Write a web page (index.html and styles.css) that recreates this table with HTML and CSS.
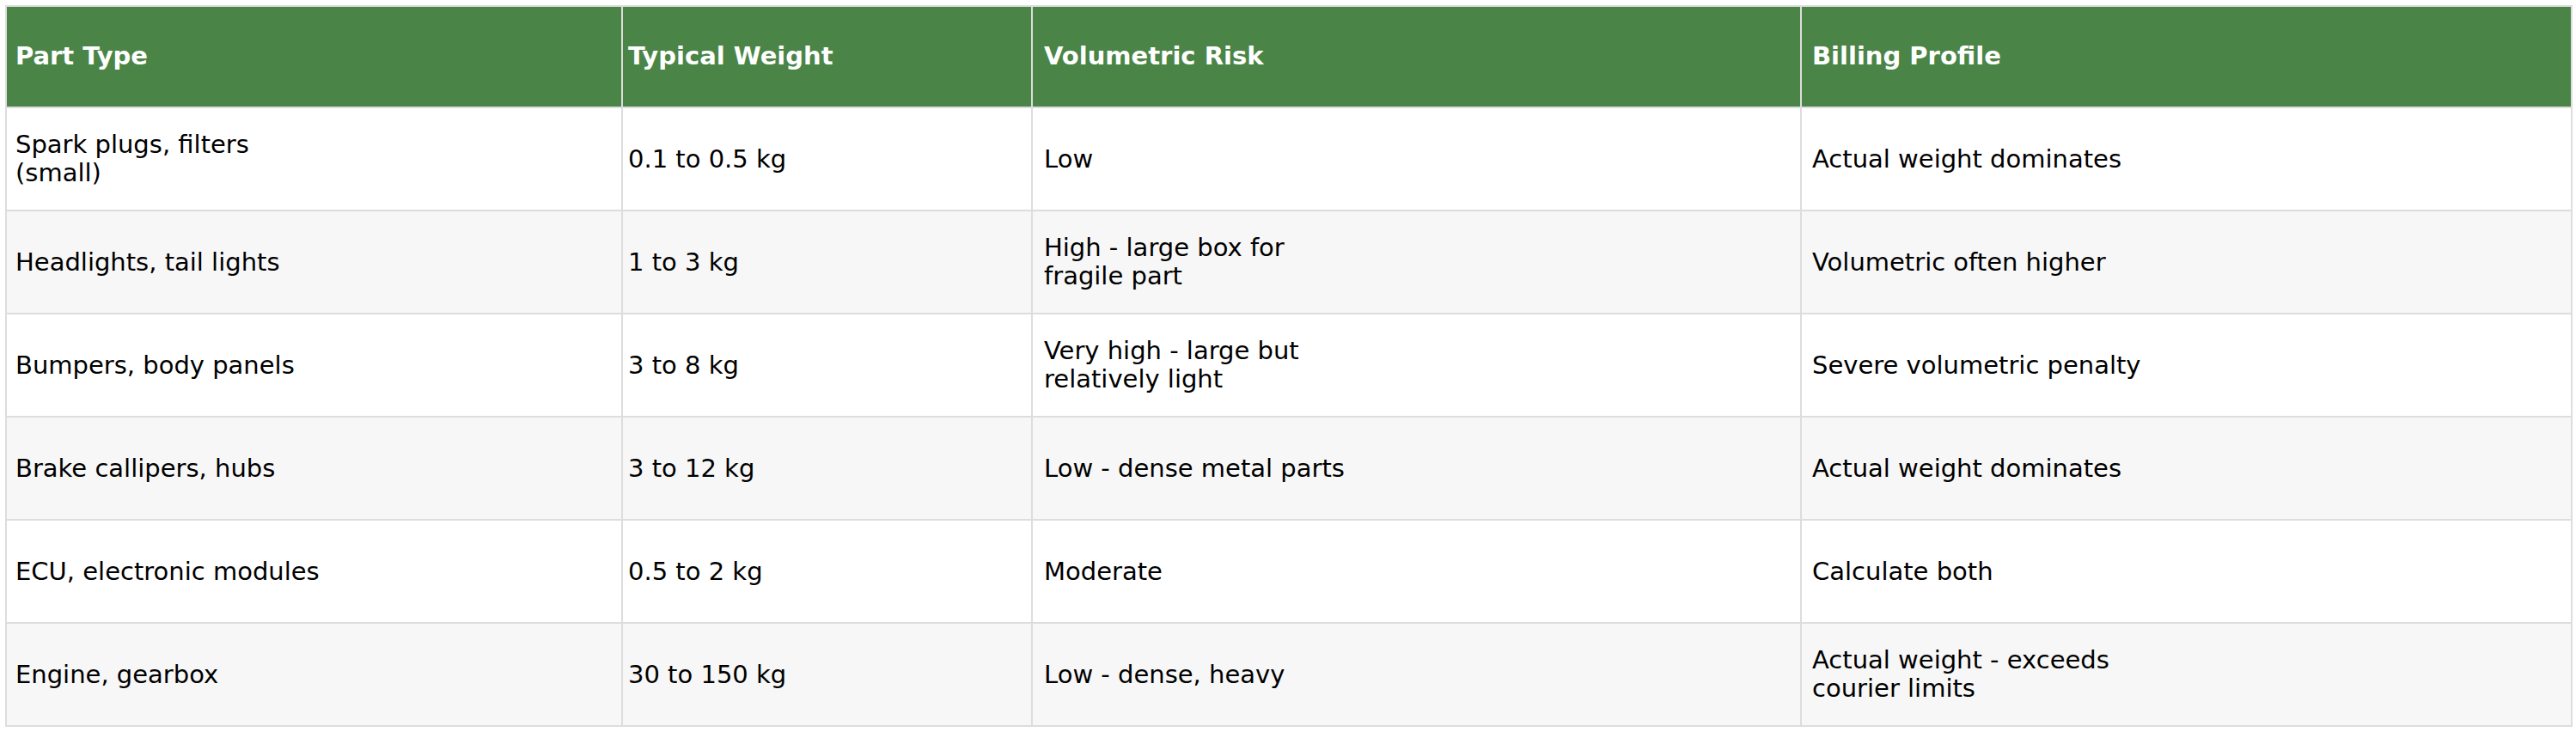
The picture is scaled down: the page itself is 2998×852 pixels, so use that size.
FILE: index.html
```html
<!DOCTYPE html>
<html>
<head>
<meta charset="utf-8">
<link rel="stylesheet" href="styles.css">
</head>
<body>
<table class="parts">
  <colgroup>
    <col class="c1">
    <col class="c2">
    <col class="c3">
    <col class="c4">
  </colgroup>
  <thead>
    <tr>
      <th class="p1">Part Type</th>
      <th class="p2">Typical Weight</th>
      <th class="p3">Volumetric Risk</th>
      <th class="p4">Billing Profile</th>
    </tr>
  </thead>
  <tbody>
    <tr>
      <td class="p1">Spark plugs, filters<br>(small)</td>
      <td class="p2">0.1 to 0.5 kg</td>
      <td class="p3">Low</td>
      <td class="p4">Actual weight dominates</td>
    </tr>
    <tr>
      <td class="p1">Headlights, tail lights</td>
      <td class="p2">1 to 3 kg</td>
      <td class="p3">High - large box for<br>fragile part</td>
      <td class="p4">Volumetric often higher</td>
    </tr>
    <tr>
      <td class="p1">Bumpers, body panels</td>
      <td class="p2">3 to 8 kg</td>
      <td class="p3">Very high - large but<br>relatively light</td>
      <td class="p4">Severe volumetric penalty</td>
    </tr>
    <tr>
      <td class="p1">Brake callipers, hubs</td>
      <td class="p2">3 to 12 kg</td>
      <td class="p3">Low - dense metal parts</td>
      <td class="p4">Actual weight dominates</td>
    </tr>
    <tr>
      <td class="p1">ECU, electronic modules</td>
      <td class="p2">0.5 to 2 kg</td>
      <td class="p3">Moderate</td>
      <td class="p4">Calculate both</td>
    </tr>
    <tr>
      <td class="p1">Engine, gearbox</td>
      <td class="p2">30 to 150 kg</td>
      <td class="p3">Low - dense, heavy</td>
      <td class="p4">Actual weight - exceeds<br>courier limits</td>
    </tr>
  </tbody>
</table>
</body>
</html>
```
FILE: styles.css
```css
html, body {
  margin: 0;
  padding: 0;
  background: #ffffff;
}

body {
  padding: 6px;
  font-family: "DejaVu Sans", "Liberation Sans", sans-serif;
  font-size: 29px;
  color: #000000;
}

.parts {
  border-collapse: collapse;
  table-layout: fixed;
  width: 2986px;
  border: 2px solid #dddddd;
}

.c1 { width: 717px; }
.c2 { width: 477px; }
.c3 { width: 895px; }
.c4 { width: 897px; }

.parts th,
.parts td {
  border: 2px solid #dddddd;
  text-align: left;
  vertical-align: middle;
  height: 120px;
  padding: 0 8px;
  line-height: 33px;
  box-sizing: border-box;
}

.parts th {
  height: 118px;
  background: #4a8547;
  color: #ffffff;
  font-weight: bold;
  padding-bottom: 2px;
}

.parts tbody tr:nth-child(even) td {
  background: #f7f7f7;
}

.parts .p1 { padding-left: 10px; }
.parts .p2 { padding-left: 6px; }
.parts .p3 { padding-left: 13px; }
.parts .p4 { padding-left: 12px; }
```
